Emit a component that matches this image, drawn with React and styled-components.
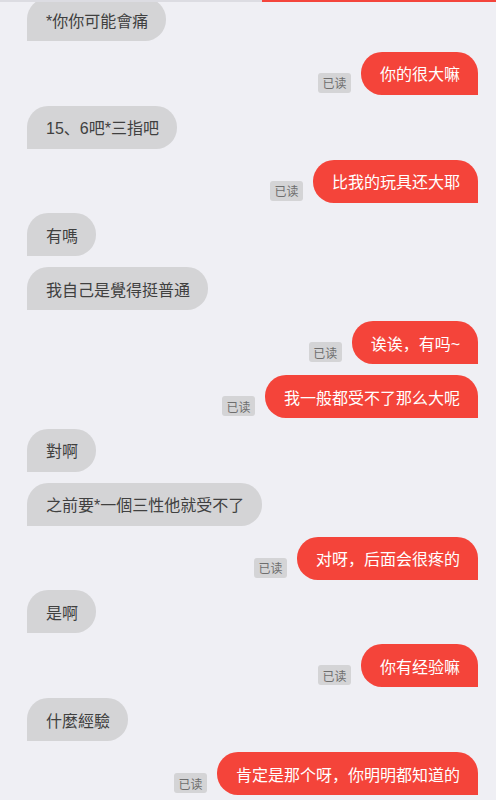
import React from 'react'
import styled, { createGlobalStyle } from 'styled-components'

const GlobalStyle = createGlobalStyle`
  html, body {
    margin: 0;
    padding: 0;
    background: #efeff4;
  }
  body {
    font-family: "Liberation Sans", "Noto Sans CJK SC", sans-serif;
    overflow: hidden;
  }
`

const Page = styled.div`
  position: relative;
  width: 496px;
  height: 800px;
  overflow: hidden;
  background: #efeff4;
`

const Progress = styled.div`
  position: absolute;
  top: 0;
  left: 0;
  right: 0;
  height: 2px;
  background: #dcdce2;
  z-index: 2;
`

const ProgressFill = styled.div`
  position: absolute;
  top: 0;
  right: 0;
  height: 100%;
  background: #f4453c;
`

const List = styled.div`
  display: flex;
  flex-direction: column;
  gap: 10.86px;
  margin-top: -2px;
  padding: 0 18px 0 27px;
`

const Row = styled.div`
  display: flex;
  align-items: flex-end;
  justify-content: ${props => (props.$mine ? 'flex-end' : 'flex-start')};
  gap: 10px;
`

const Bubble = styled.div`
  height: 43px;
  display: flex;
  align-items: center;
  padding: 0 18px 0 19px;
  font-size: 16px;
  white-space: nowrap;
  box-sizing: border-box;
  color: ${props => (props.$mine ? '#ffffff' : '#404040')};
  background: ${props => (props.$mine ? '#f4443a' : '#d4d4d6')};
  border-radius: ${props => (props.$mine ? '21px 21px 0 21px' : '21px 21px 21px 0')};
`

const ReadTag = styled.span`
  width: 33px;
  height: 20px;
  margin-bottom: 2px;
  display: flex;
  align-items: center;
  justify-content: center;
  border-radius: 3px;
  background: #d4d4d6;
  color: #6e6e6e;
  font-size: 12px;
`

const messages = [
  { mine: false, text: '*你你可能會痛' },
  { mine: true, text: '你的很大嘛' },
  { mine: false, text: '15、6吧*三指吧' },
  { mine: true, text: '比我的玩具还大耶' },
  { mine: false, text: '有嗎' },
  { mine: false, text: '我自己是覺得挺普通' },
  { mine: true, text: '诶诶，有吗~' },
  { mine: true, text: '我一般都受不了那么大呢' },
  { mine: false, text: '對啊' },
  { mine: false, text: '之前要*一個三性他就受不了' },
  { mine: true, text: '对呀，后面会很疼的' },
  { mine: false, text: '是啊' },
  { mine: true, text: '你有经验嘛' },
  { mine: false, text: '什麼經驗' },
  { mine: true, text: '肯定是那个呀，你明明都知道的' },
]

export default function App() {
  return (
    <Page>
      <GlobalStyle />
      <Progress>
        <ProgressFill style={{ width: `${(234 / 496) * 100}%` }} />
      </Progress>
      <List>
        {messages.map((m, i) => (
          <Row key={i} $mine={m.mine}>
            {m.mine && <ReadTag>已读</ReadTag>}
            <Bubble $mine={m.mine}>{m.text}</Bubble>
          </Row>
        ))}
      </List>
    </Page>
  )
}
